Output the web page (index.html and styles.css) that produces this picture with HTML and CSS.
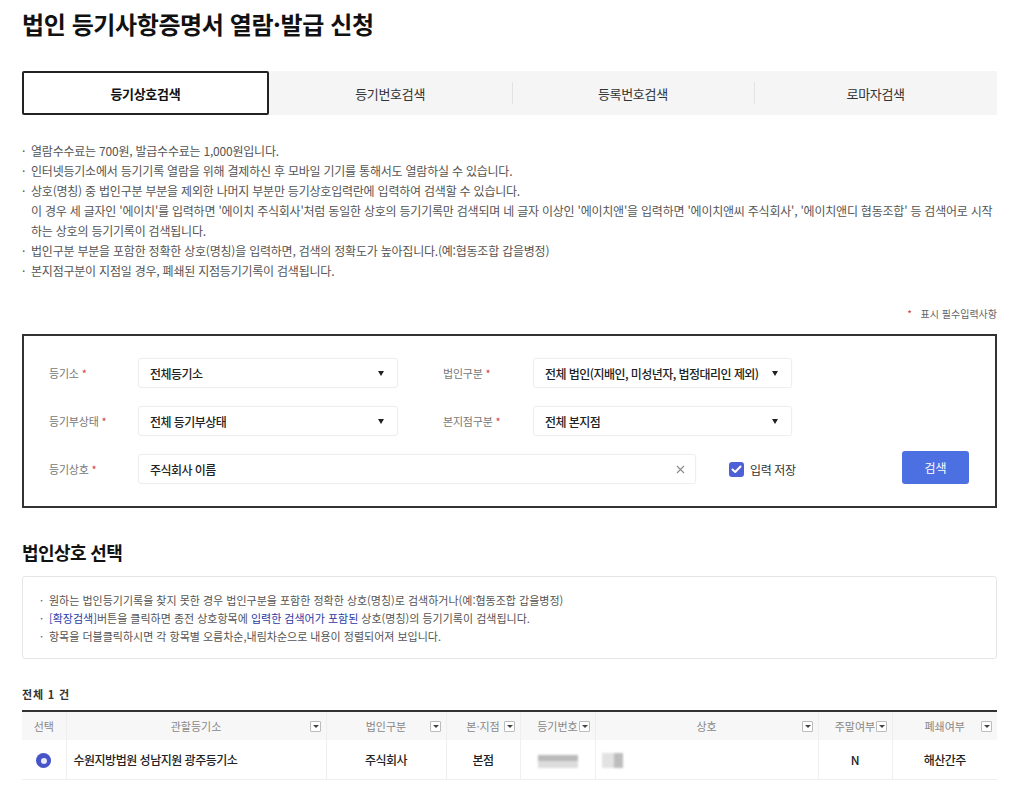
FILE: index.html
```html
<!DOCTYPE html>
<html lang="ko">
<head>
<meta charset="utf-8">
<title>법인 등기사항증명서 열람·발급 신청</title>
<link rel="stylesheet" href="styles.css">
</head>
<body>
<div class="page">
  <h1 class="title">법인 등기사항증명서 열람·발급 신청</h1>

  <div class="tabs">
    <div class="tab active">등기상호검색</div>
    <div class="tab">등기번호검색</div>
    <div class="tab sep">등록번호검색</div>
    <div class="tab sep">로마자검색</div>
  </div>

  <ul class="info">
    <li><span class="dot">·</span><span>열람수수료는 700원, 발급수수료는 1,000원입니다.</span></li>
    <li><span class="dot">·</span><span>인터넷등기소에서 등기기록 열람을 위해 결제하신 후 모바일 기기를 통해서도 열람하실 수 있습니다.</span></li>
    <li><span class="dot">·</span><span>상호(명칭) 중 법인구분 부분을 제외한 나머지 부분만 등기상호입력란에 입력하여 검색할 수 있습니다.<br>이 경우 세 글자인 '에이치'를 입력하면 '에이치 주식회사'처럼 동일한 상호의 등기기록만 검색되며 네 글자 이상인 '에이치앤'을 입력하면 '에이치앤씨 주식회사', '에이치앤디 협동조합' 등 검색어로 시작<br>하는 상호의 등기기록이 검색됩니다.</span></li>
    <li><span class="dot">·</span><span>법인구분 부분을 포함한 정확한 상호(명칭)을 입력하면, 검색의 정확도가 높아집니다.(예:협동조합 갑을병정)</span></li>
    <li><span class="dot">·</span><span>본지점구분이 지점일 경우, 폐쇄된 지점등기기록이 검색됩니다.</span></li>
  </ul>

  <p class="req-note"><span class="star">*</span> 표시 필수입력사항</p>

  <div class="form-box">
    <div class="form-row">
      <label class="flabel">등기소 <span class="star">*</span></label>
      <div class="select w1"><span>전체등기소</span><i class="caret"></i></div>
      <label class="flabel l2">법인구분 <span class="star">*</span></label>
      <div class="select w2"><span>전체 법인(지배인, 미성년자, 법정대리인 제외)</span><i class="caret"></i></div>
    </div>
    <div class="form-row">
      <label class="flabel">등기부상태 <span class="star">*</span></label>
      <div class="select w1"><span>전체 등기부상태</span><i class="caret"></i></div>
      <label class="flabel l2">본지점구분 <span class="star">*</span></label>
      <div class="select w2"><span>전체 본지점</span><i class="caret"></i></div>
    </div>
    <div class="form-row last">
      <label class="flabel">등기상호 <span class="star">*</span></label>
      <div class="select w3"><span>주식회사 이름</span>
        <svg class="clear" width="9" height="9" viewBox="0 0 9 9"><path d="M1 1L8 8M8 1L1 8" stroke="#8a8a8a" stroke-width="1.1" fill="none"/></svg>
      </div>
      <div class="check">
        <span class="cbox"><svg width="11" height="9" viewBox="0 0 11 9"><path d="M1.5 4.5L4.2 7L9.5 1.5" stroke="#fff" stroke-width="2" fill="none" stroke-linecap="round" stroke-linejoin="round"/></svg></span>
        <span>입력 저장</span>
      </div>
      <button class="btn">검색</button>
    </div>
  </div>

  <h2 class="sec-title">법인상호 선택</h2>
  <ul class="notice">
    <li><span class="dot">·</span><span>원하는 법인등기기록을 찾지 못한 경우 법인구분을 포함한 정확한 상호(명칭)로 검색하거나(예:협동조합 갑을병정)</span></li>
    <li><span class="dot">·</span><span><em class="blue">[확장검색]</em>버튼을 클릭하면 종전 상호항목에 <em class="blue">입력한 검색어가 포함된</em> 상호(명칭)의 등기기록이 검색됩니다.</span></li>
    <li><span class="dot">·</span><span>항목을 더블클릭하시면 각 항목별 오름차순,내림차순으로 내용이 정렬되어져 보입니다.</span></li>
  </ul>

  <p class="count">전체 1 건</p>

  <table class="grid">
    <colgroup>
      <col style="width:44px"><col style="width:260px"><col style="width:120px"><col style="width:74px">
      <col style="width:75px"><col style="width:223px"><col style="width:74px"><col style="width:105px">
    </colgroup>
    <thead>
      <tr>
        <th>선택</th>
        <th>관할등기소<i class="fbtn"></i></th>
        <th>법인구분<i class="fbtn"></i></th>
        <th>본·지점<i class="fbtn"></i></th>
        <th>등기번호<i class="fbtn"></i></th>
        <th>상호<i class="fbtn"></i></th>
        <th>주말여부<i class="fbtn"></i></th>
        <th>폐쇄여부<i class="fbtn"></i></th>
      </tr>
    </thead>
    <tbody>
      <tr>
        <td class="c"><span class="radio"></span></td>
        <td class="l">수원지방법원 성남지원 광주등기소</td>
        <td class="c">주식회사</td>
        <td class="c">본점</td>
        <td class="c"><span class="blur b1"></span></td>
        <td class="l"><span class="blur b2"></span></td>
        <td class="c">N</td>
        <td class="c">해산간주</td>
      </tr>
    </tbody>
  </table>
</div>
</body>
</html>
```
FILE: styles.css
```css
* { box-sizing: border-box; margin: 0; padding: 0; }
body {
  font-family: "Noto Sans CJK KR", "Noto Sans", sans-serif;
  color: #222;
  background: #fff;
}
.page { padding: 9px 27px 0 22px; }

.title {
  font-size: 24px;
  line-height: 30px;
  font-weight: 700;
  letter-spacing: -0.4px;
  color: #111;
}

.tabs {
  display: flex;
  margin-top: 32px;
  height: 44px;
  background: #f5f5f5;
}
.tab {
  flex: 1;
  display: flex;
  align-items: center;
  justify-content: center;
  font-size: 13px;
  color: #333;
  position: relative;
  letter-spacing: -0.3px;
}
.tab.active {
  background: #fff;
  border: 2px solid #222;
  border-radius: 2px;
  font-weight: 700;
  color: #111;
}
.tab.sep::before {
  content: "";
  position: absolute;
  left: 0;
  top: 11px;
  bottom: 11px;
  width: 1px;
  background: #e3e3e3;
}

.info {
  list-style: none;
  margin-top: 26px;
  font-size: 12px;
  line-height: 20px;
  color: #555;
  letter-spacing: -0.22px;
}
.info li, .notice li { display: flex; }
.dot { width: 9px; flex: none; }

.req-note {
  margin-top: 25px;
  text-align: right;
  font-size: 10px;
  line-height: 16px;
  color: #666;
}
.star { color: #d23b3b; }
.req-note .star { margin-right: 6px; }

.form-box {
  margin-top: 12px;
  border: 2px solid #333;
  padding: 22px 26px 22px 25px;
}
.form-row {
  display: flex;
  align-items: center;
  height: 30px;
  margin-bottom: 18px;
}
.form-row.last { margin-bottom: 0; }
.flabel {
  width: 89px;
  flex: none;
  font-size: 11px;
  color: #777;
  letter-spacing: -0.2px;
}
.flabel.l2 { margin-left: 45px; width: 90px; }
.select {
  height: 30px;
  border: 1px solid #eeeeee;
  border-radius: 3px;
  display: flex;
  align-items: center;
  justify-content: space-between;
  padding: 0 13px 0 11px;
  font-size: 12px;
  font-weight: 500;
  color: #222;
  letter-spacing: -0.55px;
  box-shadow: 0 0 2px rgba(0,0,0,0.03);
}
.select.w1 { width: 260px; }
.select.w2 { width: 259px; }
.select.w3 { width: 558px; padding-right: 10px; }
.caret {
  width: 0;
  height: 0;
  border-left: 3.5px solid transparent;
  border-right: 3.5px solid transparent;
  border-top: 5px solid #222;
}
.check {
  display: flex;
  align-items: center;
  margin-left: 33px;
  font-size: 12px;
  color: #333;
  gap: 6px;
  letter-spacing: -0.4px;
}
.cbox {
  width: 15px;
  height: 15px;
  border-radius: 3px;
  background: #4d60d6;
  display: flex;
  align-items: center;
  justify-content: center;
}
.btn {
  margin-left: auto;
  width: 67px;
  height: 33px;
  border: none;
  border-radius: 3px;
  background: #4c6fe2;
  color: #fff;
  font-family: inherit;
  font-size: 12px;
  margin-top: -3px;
}

.sec-title {
  margin-top: 32px;
  font-size: 18px;
  line-height: 24px;
  font-weight: 700;
  color: #111;
  letter-spacing: -0.6px;
}
.notice {
  list-style: none;
  margin-top: 12px;
  border: 1px solid #e6e6e6;
  border-radius: 3px;
  padding: 14px 17px 13px 17px;
  font-size: 11px;
  line-height: 18px;
  color: #555;
  letter-spacing: 0;
}
.blue { color: #2b3aa6; font-style: normal; }

.count {
  margin-top: 27px;
  font-size: 11px;
  line-height: 16px;
  font-weight: 700;
  color: #333;
  letter-spacing: 0.8px;
}

.grid {
  margin-top: 8px;
  width: 975px;
  border-collapse: collapse;
  table-layout: fixed;
  border-top: 2px solid #333;
}
.grid th {
  height: 29px;
  background: #f7f7f7;
  font-size: 11px;
  font-weight: 400;
  color: #888;
  text-align: center;
  position: relative;
  border-left: 1px solid #efefef;
}
.grid th:first-child, .grid td:first-child { border-left: none; }
.fbtn {
  position: absolute;
  right: 5px;
  top: 9px;
  width: 11px;
  height: 11px;
  border: 1px solid #bcbcbc;
  background: #fff;
  border-radius: 1px;
}
.fbtn::after {
  content: "";
  position: absolute;
  left: 2px;
  top: 3px;
  border-left: 3px solid transparent;
  border-right: 3px solid transparent;
  border-top: 3px solid #444;
}
.grid td {
  height: 39px;
  font-size: 12px;
  font-weight: 500;
  color: #222;
  border-left: 1px solid #efefef;
  border-bottom: 1px solid #efefef;
  letter-spacing: -0.5px;
}
.grid td.c { text-align: center; }
.grid td.l { padding-left: 7px; }
.radio {
  display: inline-block;
  width: 15px;
  height: 15px;
  border-radius: 50%;
  background: #4654c8;
  vertical-align: middle;
  position: relative;
}
.radio::after {
  content: "";
  position: absolute;
  left: 4.5px;
  top: 4.5px;
  width: 6px;
  height: 6px;
  border-radius: 50%;
  background: #e8eaf8;
}
.blur {
  display: inline-block;
  vertical-align: middle;
  filter: blur(1px);
}
.blur.b1 {
  width: 40px;
  height: 13px;
  background: linear-gradient(180deg, #b9b9b9 0 45%, #dcdcdc 45% 100%);
}
.blur.b2 {
  width: 21px;
  height: 15px;
  background: linear-gradient(90deg, #e2e2e2 0 55%, #bdbdbd 55% 100%);
  margin-left: -1px;
}
```
